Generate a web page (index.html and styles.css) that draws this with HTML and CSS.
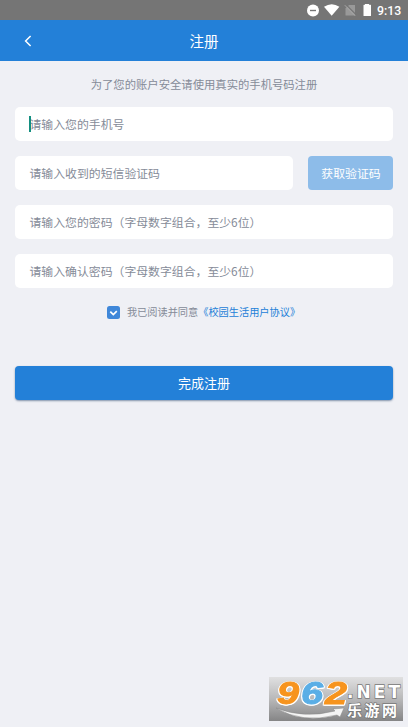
FILE: index.html
```html
<!DOCTYPE html>
<html lang="zh-CN">
<head>
<meta charset="utf-8">
<title>注册</title>
<link rel="stylesheet" href="styles.css">
</head>
<body>
<div class="status">
  <svg class="status-icons" width="76" height="20" viewBox="0 0 76 20">
    <circle cx="7" cy="10.5" r="6" fill="#fff"/>
    <path d="M4 10.5h6" stroke="#757575" stroke-width="1.400"/>
    <path d="M18 6.800Q25.800 1.800 33.400 6.800L25.700 15.800Z" fill="#fff"/>
    <path d="M43 5H49V15.500H39.500V8.500Z" fill="#999"/>
    <path d="M39.500 4.200L50 14.700" stroke="#757575" stroke-width="1.200"/>
    <path d="M38.800 5.200L49.200 15.800" stroke="#a8a8a8" stroke-width="1"/>
    <path d="M59 4.800V4h4v.800H64.500q.500 0 .500.500V15.500q0 .500-.500.500H58q-.500 0-.500-.500V5.300q0-.500.500-.500Z" fill="#fff"/>
  </svg>
  <span class="clock">9:13</span>
</div>
<header class="nav">
  <svg class="back" width="8" height="12" viewBox="0 0 8 12"><path d="M6.600 1L1.600 6l5 5" fill="none" stroke="#fff" stroke-width="1.500"/></svg>
  <h1 class="title">注册</h1>
</header>
<main class="form">
  <p class="hint">为了您的账户安全请使用真实的手机号码注册</p>
  <div class="field focused">请输入您的手机号</div>
  <div class="code-row">
    <div class="field">请输入收到的短信验证码</div>
    <div class="get-code">获取验证码</div>
  </div>
  <div class="field">请输入您的密码（字母数字组合，至少6位）</div>
  <div class="field">请输入确认密码（字母数字组合，至少6位）</div>
  <div class="agree">
    <svg class="check" width="13" height="13" viewBox="0 0 13 13"><rect width="13" height="13" rx="2.500" fill="#3f87d9"/><path d="M3.300 5.600l3 3 3.500-3.400" fill="none" stroke="#fff" stroke-width="1.700"/></svg>
    <span>我已阅读并同意</span><span class="link">《校园生活用户协议》</span>
  </div>
  <div class="submit">完成注册</div>
</main>
<svg class="watermark" width="134" height="44" viewBox="0 0 134 44">
  <defs>
    <linearGradient id="plate" x1="0" y1="0" x2="0" y2="1"><stop offset="0" stop-color="#e0e0e1"/><stop offset=".5" stop-color="#b8b8b9"/><stop offset="1" stop-color="#858586"/></linearGradient>
  </defs>
  <rect width="134" height="44" fill="url(#plate)"/>
  <path d="M7 31Q35 42 66 34l-2-2 11-1-4 9-3-2Q33 47 7 31Z" fill="#f4f4f4" stroke="#888" stroke-width=".5"/>
  <g class="digits">
    <text x="8" y="27" textLength="22" lengthAdjust="spacingAndGlyphs" fill="#f7941e" stroke="#f7941e">9</text>
    <text x="32" y="27" textLength="22" lengthAdjust="spacingAndGlyphs" fill="#5aaee6" stroke="#5aaee6">6</text>
    <text x="56" y="27" textLength="22" lengthAdjust="spacingAndGlyphs" fill="#f7941e" stroke="#f7941e">2</text>
  </g>
  <text class="net" x="78" y="21" textLength="53">.NET</text>
  <text class="brand" x="78" y="38.800" textLength="50">乐游网</text>
</svg>
</body>
</html>
```
FILE: styles.css
```css
* { box-sizing: border-box; }
body {
  margin: 0;
  height: 727px;
  overflow: hidden;
  background: #eff0f5;
  color: #858b98;
  font-family: "Noto Sans CJK SC", sans-serif;
  font-size: 11.87px;
}
.status {
  height: 20px;
  background: #757575;
  display: flex;
  justify-content: flex-end;
  align-items: center;
  padding-right: 7px;
}
.status-icons { margin-right: -5px; }
.clock {
  width: 24px;
  margin: 1px 0 0;
  color: #fff;
  font: 500 12.3px/20px Roboto, sans-serif;
  white-space: nowrap;
}
.nav {
  height: 41px;
  background: #2380d8;
  display: grid;
  grid-template-columns: 24px 1fr 24px;
  align-items: center;
}
.back { justify-self: end; margin-right: -8px; }
.title {
  margin: 0;
  text-align: center;
  color: #fff;
  font-size: 14.5px;
  font-weight: 400;
  line-height: 20px;
}
.form {
  display: flex;
  flex-direction: column;
  padding: 0 15px;
  gap: 15px;
}
.hint {
  margin: 13px 0 -2px;
  height: 20px;
  line-height: 20px;
  text-align: center;
  font-size: 11.33px;
}
.field {
  height: 34px;
  flex: 1 0 auto;
  padding-left: 14.5px;
  border-radius: 5px;
  background: #fff;
  line-height: 34px;
  white-space: nowrap;
}
.focused { position: relative; }
.focused::before {
  content: "";
  position: absolute;
  left: 14px;
  top: 9px;
  width: 2px;
  height: 16px;
  background: #148f80;
}
.code-row { display: flex; gap: 15px; }
.get-code {
  width: 85px;
  height: 34px;
  padding-left: 1px;
  border-radius: 4px;
  background: #8dbce9;
  color: #fff;
  line-height: 34px;
  text-align: center;
}
.agree {
  display: flex;
  justify-content: center;
  align-items: center;
  height: 20px;
  margin-top: -1px;
  padding-right: 1px;
  font-size: 10.2px;
  line-height: 20px;
}
.check { margin-right: 7px; }
.link { color: #2380d8; }
.submit {
  height: 34px;
  margin-top: 29px;
  border-radius: 4px;
  background: #2380d8;
  box-shadow: 0 1px 2px rgba(40, 70, 110, .55);
  color: #fff;
  font-size: 13px;
  line-height: 34px;
  text-align: center;
}
.watermark {
  position: absolute;
  left: 269px;
  top: 677px;
}
.digits {
  font: italic 700 32px "Liberation Sans", sans-serif;
  stroke-width: 1px;
  filter: drop-shadow(1px 0 0 #fff) drop-shadow(-1px 0 0 #fff) drop-shadow(0 1px 0 #fff);
}
.net, .brand {
  fill: #fff;
  stroke: #777;
  stroke-width: 1.4px;
  paint-order: stroke;
}
.net { font: 700 17px "DejaVu Sans", sans-serif; }
.brand { font: 700 15px "Noto Sans CJK SC", sans-serif; }
```
